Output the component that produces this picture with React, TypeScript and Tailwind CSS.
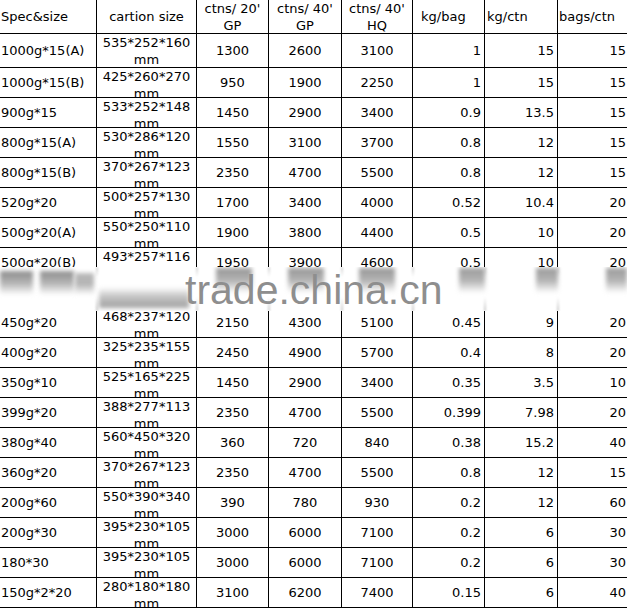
import React from "react"

type Row = [string, string, string, string, string, string, string, string] | null

const rows: Row[] = [
    ["1000g*15(A)", "535*252*160", "1300", "2600", "3100", "1", "15", "15"],
    ["1000g*15(B)", "425*260*270", "950", "1900", "2250", "1", "15", "15"],
    ["900g*15", "533*252*148", "1450", "2900", "3400", "0.9", "13.5", "15"],
    ["800g*15(A)", "530*286*120", "1550", "3100", "3700", "0.8", "12", "15"],
    ["800g*15(B)", "370*267*123", "2350", "4700", "5500", "0.8", "12", "15"],
    ["520g*20", "500*257*130", "1700", "3400", "4000", "0.52", "10.4", "20"],
    ["500g*20(A)", "550*250*110", "1900", "3800", "4400", "0.5", "10", "20"],
    ["500g*20(B)", "493*257*116", "1950", "3900", "4600", "0.5", "10", "20"],
    null, // row hidden under the watermark band
    ["450g*20", "468*237*120", "2150", "4300", "5100", "0.45", "9", "20"],
    ["400g*20", "325*235*155", "2450", "4900", "5700", "0.4", "8", "20"],
    ["350g*10", "525*165*225", "1450", "2900", "3400", "0.35", "3.5", "10"],
    ["399g*20", "388*277*113", "2350", "4700", "5500", "0.399", "7.98", "20"],
    ["380g*40", "560*450*320", "360", "720", "840", "0.38", "15.2", "40"],
    ["360g*20", "370*267*123", "2350", "4700", "5500", "0.8", "12", "15"],
    ["200g*60", "550*390*340", "390", "780", "930", "0.2", "12", "60"],
    ["200g*30", "395*230*105", "3000", "6000", "7100", "0.2", "6", "30"],
    ["180*30", "395*230*105", "3000", "6000", "7100", "0.2", "6", "30"],
    ["150g*2*20", "280*180*180", "3100", "6200", "7400", "0.15", "6", "40"],
]

// blurred leftovers of the covered text
const smudges = [
    { l: 0, t: 4, w: 33, h: 24, c: "from-[#8c8c8c]" },
    { l: 40, t: 4, w: 34, h: 24, c: "from-[#8e8e8e]" },
    { l: 75, t: 6, w: 19, h: 22, c: "from-[#b8b8b8]" },
    { l: 216, t: 1, w: 36, h: 25, c: "from-[#979797]" },
    { l: 288, t: 1, w: 36, h: 25, c: "from-[#979797]" },
    { l: 359, t: 1, w: 36, h: 25, c: "from-[#979797]" },
    { l: 459, t: 1, w: 26, h: 25, c: "from-[#9c9c9c]" },
    { l: 536, t: 1, w: 22, h: 25, c: "from-[#9c9c9c]" },
    { l: 606, t: 1, w: 21, h: 25, c: "from-[#9c9c9c]" },
]

// faded stubs of the grid lines inside the band
const stubs = [96, 196, 268, 341, 412, 484, 557]

const cell = "border-r border-b border-black overflow-hidden flex"

function BodyRow({ row, first }: { row: Row; first: boolean }) {
    const h = first ? "h-[34px]" : "h-[30px]"
    const r = row ?? ["", "", "", "", "", "", "", ""]
    return (
        <>
            <div className={`${cell} ${h} items-center pl-[1px] whitespace-nowrap`}>{r[0]}</div>
            <div className={`${cell} ${h} flex-col items-center text-center`}>
                {row && (
                    <>
                        <span>{r[1]}</span>
                        <span>mm</span>
                    </>
                )}
            </div>
            <div className={`${cell} ${h} items-center justify-center`}>{r[2]}</div>
            <div className={`${cell} ${h} items-center justify-center`}>{r[3]}</div>
            <div className={`${cell} ${h} items-center justify-center`}>{r[4]}</div>
            <div className={`${cell} ${h} items-center justify-end pr-[3px]`}>{r[5]}</div>
            <div className={`${cell} ${h} items-center justify-end pr-[3px]`}>{r[6]}</div>
            <div className={`${cell} ${h} items-center justify-end pr-[3px]`}>{r[7]}</div>
        </>
    )
}

export default function App() {
    return (
        <div className="relative w-[627px] h-[609px] overflow-hidden bg-white">
            <div className="grid grid-cols-[97px_100px_72px_73px_71px_72px_73px_72px] w-[630px] font-['DejaVu_Sans',sans-serif] text-[13px] leading-[17px] text-black">
                {/* header */}
                <div className={`${cell} h-[34px] items-center pl-[1px]`}>Spec&amp;size</div>
                <div className={`${cell} h-[34px] items-center justify-center`}>cartion size</div>
                <div className={`${cell} h-[34px] items-center justify-center text-center`}>
                    ctns/ 20'<br />GP
                </div>
                <div className={`${cell} h-[34px] items-center justify-center text-center`}>
                    ctns/ 40'<br />GP
                </div>
                <div className={`${cell} h-[34px] items-center justify-center text-center`}>
                    ctns/ 40'<br />HQ
                </div>
                <div className={`${cell} h-[34px] items-center pl-[8px]`}>kg/bag</div>
                <div className={`${cell} h-[34px] items-center pl-[2px]`}>kg/ctn</div>
                <div className={`${cell} h-[34px] items-center pl-[1px]`}>bags/ctn</div>

                {rows.map((row, i) => (
                    <BodyRow key={i} row={row} first={i === 0} />
                ))}
            </div>

            {/* watermark band */}
            <div className="absolute left-0 top-[267px] w-[627px] h-[44px] bg-white overflow-hidden">
                {stubs.map((x) => (
                    <React.Fragment key={x}>
                        <div
                            className="absolute top-0 w-[2px] h-[10px] bg-linear-to-b from-[#cfcfcf] to-white/0 blur-[1px]"
                            style={{ left: x - 0.5 }}
                        />
                        <div
                            className="absolute bottom-0 w-[2px] h-[14px] bg-linear-to-t from-[#c8c8c8] to-white/0 blur-[1px]"
                            style={{ left: x - 0.5 }}
                        />
                    </React.Fragment>
                ))}
                {smudges.map((s, i) => (
                    <div
                        key={i}
                        className={`absolute bg-linear-to-b ${s.c} via-[#b4b4b4] to-white/0 blur-[2px]`}
                        style={{ left: s.l, top: s.t, width: s.w, height: s.h }}
                    />
                ))}
                <div className="absolute left-[99px] top-[20px] w-[90px] h-[21px] bg-linear-to-t from-[#a2a2a2] via-[#c0c0c0] to-white/0 blur-[2px]" />
                <div className="absolute left-[185px] top-[3px] font-['Liberation_Sans',Arial,sans-serif] text-[41px] leading-none text-[#8e8e8e] whitespace-nowrap">
                    trade.china.cn
                </div>
            </div>
        </div>
    )
}
